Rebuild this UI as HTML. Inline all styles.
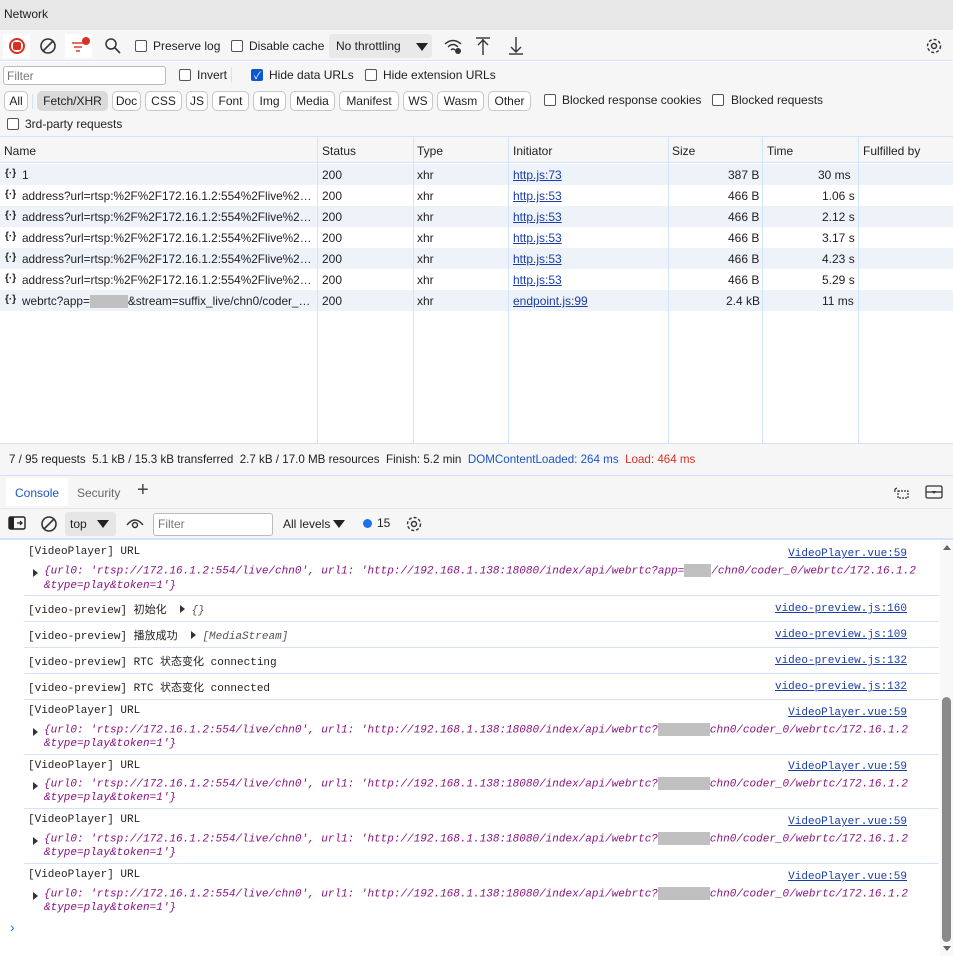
<!DOCTYPE html>
<html><head><meta charset="utf-8"><style>
*{box-sizing:border-box;margin:0;padding:0}
body{width:953px;height:956px;overflow:hidden;background:#fff;font-family:"Liberation Sans","Noto Sans CJK SC",sans-serif;font-size:12px;color:#1f1f1f;position:relative}
.a{position:absolute;white-space:nowrap}
.cb{position:absolute;width:12px;height:12px;border:1px solid #555;border-radius:2px;background:#fff}
.cbc{background:#0b57d0;border-color:#0b57d0}
.btn{position:absolute;top:91px;height:20px;border:1px solid #c7c7c7;border-radius:5px;background:#fff;font-size:12px;line-height:18px;text-align:center;color:#1f1f1f}
.row{position:absolute;left:0;width:953px;height:21px}
.st{background:#eef2f9}
.mono{font-family:"Liberation Mono","Noto Sans CJK SC",monospace;font-size:11px}
.sep{position:absolute;left:24px;width:915px;height:1px;background:#d3e3fd}
.lnk{color:#1a3da8;text-decoration:underline}
.obj{color:#881280;font-style:italic}
.gray{display:inline-block;background:#c0c0c0;height:13px;vertical-align:middle}
.tri{display:inline-block;width:0;height:0;border-left:5px solid #333;border-top:4px solid transparent;border-bottom:4px solid transparent}
.vl{position:absolute;top:137px;height:306px;width:1px;background:#d3e3fd}
.nm{width:292px;overflow:hidden;text-overflow:ellipsis;font-size:11.8px}
</style></head><body>
<div class="a" style="left:0;top:0;width:953px;height:30px;background:#e7e7e7"></div>
<div class="a" style="left:4px;top:7px">Network</div>
<div class="a" style="left:0;top:30px;width:953px;height:31px;background:#f6f6f6;border-bottom:1px solid #d3e3fd"></div>
<div class="a" style="left:3px;top:34px;width:27px;height:24px;background:#fff"></div>
<div class="a" style="left:9px;top:38px;width:16px;height:16px;border:2px solid #d93025;border-radius:50%"></div>
<div class="a" style="left:13px;top:42px;width:8px;height:8px;background:#d93025;border-radius:2px"></div>
<svg class="a" style="left:39px;top:37px" width="18" height="18"><circle cx="9" cy="9" r="7" fill="none" stroke="#333" stroke-width="1.6"/><line x1="4" y1="14" x2="14" y2="4" stroke="#333" stroke-width="1.6"/></svg>
<div class="a" style="left:65px;top:34px;width:27px;height:24px;background:#fff"></div>
<svg class="a" style="left:70px;top:37px" width="22" height="18"><g stroke="#d93025" stroke-width="1.4"><line x1="2" y1="6" x2="14" y2="6"/><line x1="4" y1="10" x2="12" y2="10"/><line x1="6" y1="14" x2="10" y2="14"/></g><circle cx="16" cy="4" r="4" fill="#d93025"/></svg>
<svg class="a" style="left:104px;top:37px" width="18" height="18"><circle cx="7" cy="7" r="5" fill="none" stroke="#333" stroke-width="1.5"/><line x1="11" y1="11" x2="16" y2="16" stroke="#333" stroke-width="1.6"/></svg>
<div class="cb" style="left:135px;top:40px"></div><div class="a" style="left:153px;top:39px">Preserve log</div>
<div class="cb" style="left:231px;top:40px"></div><div class="a" style="left:249px;top:39px">Disable cache</div>
<div class="a" style="left:329px;top:34px;width:103px;height:24px;background:#e9e9e9;border-radius:3px"></div>
<div class="a" style="left:336px;top:39px">No throttling</div>
<div class="a" style="left:416px;top:43px;border-left:6px solid transparent;border-right:6px solid transparent;border-top:8px solid #222"></div>
<svg class="a" style="left:443px;top:37px" width="20" height="18"><g fill="none" stroke="#333" stroke-width="1.4"><path d="M2 7 Q10 0 18 7"/><path d="M5 10 Q10 5 15 10"/><path d="M8 13 Q10 11 12 13"/></g><circle cx="15" cy="14" r="3" fill="#333"/></svg>
<svg class="a" style="left:475px;top:36px" width="16" height="20"><g stroke="#333" stroke-width="1.4" fill="none"><line x1="1" y1="2" x2="15" y2="2"/><line x1="8" y1="3" x2="8" y2="19"/><path d="M3 9 L8 4 L13 9"/></g></svg>
<svg class="a" style="left:508px;top:36px" width="16" height="20"><g stroke="#333" stroke-width="1.4" fill="none"><line x1="1" y1="18" x2="15" y2="18"/><line x1="8" y1="1" x2="8" y2="16"/><path d="M3 11 L8 16 L13 11"/></g></svg>
<svg class="a" style="left:925px;top:37px" width="18" height="18"><circle cx="9" cy="9" r="6.5" fill="none" stroke="#333" stroke-width="1.4" stroke-dasharray="3 2"/><circle cx="9" cy="9" r="2.5" fill="none" stroke="#333" stroke-width="1.4"/></svg>
<div class="a" style="left:0;top:62px;width:953px;height:75px;background:#f6f6f6;border-bottom:1px solid #d3e3fd"></div>
<div class="a" style="left:3px;top:66px;width:163px;height:19px;background:#fff;border:1px solid #bbb;border-radius:3px"></div>
<div class="a" style="left:7px;top:69px;color:#777">Filter</div>
<div class="cb" style="left:179px;top:69px"></div><div class="a" style="left:197px;top:68px">Invert</div>
<div class="a" style="left:231px;top:67px;width:1px;height:16px;background:#d3e3fd"></div>
<div class="cb cbc" style="left:251px;top:69px"></div><div class="a" style="left:254px;top:67px;color:#fff;font-size:10px">✓</div>
<div class="a" style="left:269px;top:68px">Hide data URLs</div>
<div class="cb" style="left:365px;top:69px"></div><div class="a" style="left:383px;top:68px">Hide extension URLs</div>
<div class="btn" style="left:4px;width:24px">All</div>
<div class="a" style="left:32px;top:94px;width:1px;height:15px;background:#d3e3fd"></div>
<div class="btn" style="left:37px;width:71px;background:#dadada;border-color:#dadada">Fetch/XHR</div>
<div class="btn" style="left:112px;width:29px">Doc</div>
<div class="btn" style="left:145px;width:37px">CSS</div>
<div class="btn" style="left:186px;width:22px">JS</div>
<div class="btn" style="left:212px;width:37px">Font</div>
<div class="btn" style="left:253px;width:33px">Img</div>
<div class="btn" style="left:290px;width:45px">Media</div>
<div class="btn" style="left:339px;width:60px">Manifest</div>
<div class="btn" style="left:403px;width:30px">WS</div>
<div class="btn" style="left:437px;width:47px">Wasm</div>
<div class="btn" style="left:488px;width:43px">Other</div>
<div class="cb" style="left:544px;top:94px"></div><div class="a" style="left:562px;top:93px">Blocked response cookies</div>
<div class="cb" style="left:712px;top:94px"></div><div class="a" style="left:731px;top:93px">Blocked requests</div>
<div class="cb" style="left:7px;top:118px"></div><div class="a" style="left:25px;top:117px">3rd-party requests</div>
<div class="a" style="left:0;top:137px;width:953px;height:26px;background:#f6f6f6;border-bottom:1px solid #d3e3fd"></div>
<div class="a" style="left:4px;top:144px">Name</div>
<div class="a" style="left:322px;top:144px">Status</div>
<div class="a" style="left:417px;top:144px">Type</div>
<div class="a" style="left:513px;top:144px">Initiator</div>
<div class="a" style="left:672px;top:144px">Size</div>
<div class="a" style="left:767px;top:144px">Time</div>
<div class="a" style="left:863px;top:144px">Fulfilled by</div>
<div class="row st" style="top:164px"></div>
<div class="row st" style="top:206px"></div>
<div class="row st" style="top:248px"></div>
<div class="row st" style="top:290px"></div>
<div class="vl" style="left:317px"></div><div class="vl" style="left:413px"></div><div class="vl" style="left:508px"></div><div class="vl" style="left:668px"></div><div class="vl" style="left:762px"></div><div class="vl" style="left:858px"></div>
<div class="a" style="left:5px;top:168px;font-size:10px;font-weight:bold">{·}</div><div class="a" style="left:22px;top:168px">1</div>
<div class="a" style="left:322px;top:168px">200</div><div class="a" style="left:417px;top:168px">xhr</div><div class="a lnk" style="left:513px;top:168px">http.js:73</div><div class="a" style="left:728px;top:168px">387 B</div><div class="a" style="left:818px;top:168px">30 ms</div>
<div class="a" style="left:5px;top:189px;font-size:10px;font-weight:bold">{·}</div><div class="a nm" style="left:22px;top:189px">address?url=rtsp:%2F%2F172.16.1.2:554%2Flive%2Fchn0</div>
<div class="a" style="left:322px;top:189px">200</div><div class="a" style="left:417px;top:189px">xhr</div><div class="a lnk" style="left:513px;top:189px">http.js:53</div><div class="a" style="left:728px;top:189px">466 B</div><div class="a" style="left:822px;top:189px">1.06 s</div>
<div class="a" style="left:5px;top:210px;font-size:10px;font-weight:bold">{·}</div><div class="a nm" style="left:22px;top:210px">address?url=rtsp:%2F%2F172.16.1.2:554%2Flive%2Fchn0</div>
<div class="a" style="left:322px;top:210px">200</div><div class="a" style="left:417px;top:210px">xhr</div><div class="a lnk" style="left:513px;top:210px">http.js:53</div><div class="a" style="left:728px;top:210px">466 B</div><div class="a" style="left:822px;top:210px">2.12 s</div>
<div class="a" style="left:5px;top:231px;font-size:10px;font-weight:bold">{·}</div><div class="a nm" style="left:22px;top:231px">address?url=rtsp:%2F%2F172.16.1.2:554%2Flive%2Fchn0</div>
<div class="a" style="left:322px;top:231px">200</div><div class="a" style="left:417px;top:231px">xhr</div><div class="a lnk" style="left:513px;top:231px">http.js:53</div><div class="a" style="left:728px;top:231px">466 B</div><div class="a" style="left:822px;top:231px">3.17 s</div>
<div class="a" style="left:5px;top:252px;font-size:10px;font-weight:bold">{·}</div><div class="a nm" style="left:22px;top:252px">address?url=rtsp:%2F%2F172.16.1.2:554%2Flive%2Fchn0</div>
<div class="a" style="left:322px;top:252px">200</div><div class="a" style="left:417px;top:252px">xhr</div><div class="a lnk" style="left:513px;top:252px">http.js:53</div><div class="a" style="left:728px;top:252px">466 B</div><div class="a" style="left:822px;top:252px">4.23 s</div>
<div class="a" style="left:5px;top:273px;font-size:10px;font-weight:bold">{·}</div><div class="a nm" style="left:22px;top:273px">address?url=rtsp:%2F%2F172.16.1.2:554%2Flive%2Fchn0</div>
<div class="a" style="left:322px;top:273px">200</div><div class="a" style="left:417px;top:273px">xhr</div><div class="a lnk" style="left:513px;top:273px">http.js:53</div><div class="a" style="left:728px;top:273px">466 B</div><div class="a" style="left:822px;top:273px">5.29 s</div>
<div class="a" style="left:5px;top:294px;font-size:10px;font-weight:bold">{·}</div><div class="a nm" style="left:22px;top:294px">webrtc?app=<span class="gray" style="width:38px"></span>&amp;stream=suffix_live/chn0/coder_0/webrtc</div>
<div class="a" style="left:322px;top:294px">200</div><div class="a" style="left:417px;top:294px">xhr</div><div class="a lnk" style="left:513px;top:294px">endpoint.js:99</div><div class="a" style="left:726px;top:294px">2.4 kB</div><div class="a" style="left:822px;top:294px">11 ms</div>
<div class="a" style="left:0;top:443px;width:953px;height:33px;background:#f6f6f6;border-top:1px solid #d3e3fd;border-bottom:1px solid #d3e3fd"></div>
<div class="a" style="left:9px;top:453px;font-size:11.6px">7 / 95 requests &nbsp;5.1 kB / 15.3 kB transferred &nbsp;2.7 kB / 17.0 MB resources &nbsp;Finish: 5.2 min &nbsp;<span style="color:#1a55c8">DOMContentLoaded: 264 ms</span> &nbsp;<span style="color:#d93025">Load: 464 ms</span></div>
<div class="a" style="left:0;top:476px;width:953px;height:32px;background:#f6f6f6;box-shadow:0 1px 2px rgba(0,0,0,.15)"></div>
<div class="a" style="left:6px;top:478px;width:62px;height:28px;background:#fff"></div>
<div class="a" style="left:15px;top:486px;color:#1a55c8">Console</div>
<div class="a" style="left:77px;top:486px;color:#666">Security</div>
<div class="a" style="left:137px;top:479px;font-size:20px;color:#444">+</div>
<svg class="a" style="left:892px;top:485px" width="18" height="14"><g fill="none" stroke="#333" stroke-width="1.2"><rect x="6" y="6" width="10" height="7" stroke-dasharray="2 1"/><path d="M5 3 Q2 4 3 7"/></g></svg>
<svg class="a" style="left:925px;top:485px" width="18" height="14"><g fill="none" stroke="#333" stroke-width="1.3"><rect x="1" y="1" width="16" height="12" rx="1.5"/><line x1="1" y1="7" x2="17" y2="7"/></g><path d="M7 6 L11 6 L9 9z" fill="#333"/></svg>
<div class="a" style="left:0;top:509px;width:953px;height:31px;background:#f6f6f6;border-bottom:2px solid #d3e3fd"></div>
<svg class="a" style="left:8px;top:516px" width="18" height="14"><rect x="1" y="1" width="16" height="12" rx="1.5" fill="none" stroke="#222" stroke-width="1.4"/><rect x="1" y="1" width="5" height="12" fill="#222"/><path d="M9 7 h5 M12 5 l2 2 l-2 2" stroke="#222" stroke-width="1.2" fill="none"/></svg>
<svg class="a" style="left:40px;top:515px" width="18" height="18"><circle cx="9" cy="9" r="7" fill="none" stroke="#333" stroke-width="1.6"/><line x1="4" y1="14" x2="14" y2="4" stroke="#333" stroke-width="1.6"/></svg>
<div class="a" style="left:65px;top:512px;width:51px;height:24px;background:#e6e6e6;border-radius:3px"></div>
<div class="a" style="left:70px;top:517px">top</div>
<div class="a" style="left:97px;top:520px;border-left:6px solid transparent;border-right:6px solid transparent;border-top:8px solid #222"></div>
<svg class="a" style="left:126px;top:517px" width="18" height="12"><path d="M1 8 Q9 -2 17 8" fill="none" stroke="#333" stroke-width="1.4"/><circle cx="9" cy="8" r="2.5" fill="none" stroke="#333" stroke-width="1.4"/></svg>
<div class="a" style="left:153px;top:513px;width:120px;height:23px;background:#fff;border:1px solid #bbb;border-radius:3px"></div>
<div class="a" style="left:158px;top:517px;color:#777">Filter</div>
<div class="a" style="left:283px;top:517px">All levels</div>
<div class="a" style="left:333px;top:520px;border-left:6px solid transparent;border-right:6px solid transparent;border-top:8px solid #222"></div>
<div class="a" style="left:363px;top:519px;width:9px;height:9px;border-radius:50%;background:#1a73e8"></div>
<div class="a" style="left:377px;top:516px">15</div>
<svg class="a" style="left:405px;top:515px" width="18" height="18"><circle cx="9" cy="9" r="6.5" fill="none" stroke="#333" stroke-width="1.4" stroke-dasharray="3 2"/><circle cx="9" cy="9" r="2.5" fill="none" stroke="#333" stroke-width="1.4"/></svg>
<div class="mono">
<div class="a" style="left:28px;top:546px">[VideoPlayer] URL</div><div class="a lnk" style="right:46px;top:548px">VideoPlayer.vue:59</div>
<div class="a" style="left:33px;top:569px"><span class="tri"></span></div>
<div class="a obj" style="left:44px;top:564px">{url0: 'rtsp://172.16.1.2:554/live/chn0', url1: 'http://192.168.1.138:18080/index/api/webrtc?app=<span class="gray" style="width:27px"></span>/chn0/coder_0/webrtc/172.16.1.2</div>
<div class="a obj" style="left:44px;top:580px">&amp;type=play&amp;token=1'}</div>
<div class="sep" style="top:595px"></div>
<div class="a" style="left:28px;top:601px">[video-preview] 初始化 &nbsp;<span class="tri"></span> <span class="obj" style="color:#555">{}</span></div><div class="a lnk" style="right:46px;top:603px">video-preview.js:160</div>
<div class="sep" style="top:621px"></div>
<div class="a" style="left:28px;top:627px">[video-preview] 播放成功 &nbsp;<span class="tri"></span> <span class="obj" style="color:#555">[MediaStream]</span></div><div class="a lnk" style="right:46px;top:629px">video-preview.js:109</div>
<div class="sep" style="top:647px"></div>
<div class="a" style="left:28px;top:653px">[video-preview] RTC 状态变化 connecting</div><div class="a lnk" style="right:46px;top:655px">video-preview.js:132</div>
<div class="sep" style="top:673px"></div>
<div class="a" style="left:28px;top:679px">[video-preview] RTC 状态变化 connected</div><div class="a lnk" style="right:46px;top:681px">video-preview.js:132</div>
<div class="sep" style="top:699px"></div>
<div class="a" style="left:28px;top:705px">[VideoPlayer] URL</div><div class="a lnk" style="right:46px;top:707px">VideoPlayer.vue:59</div>
<div class="a" style="left:33px;top:728px"><span class="tri"></span></div>
<div class="a obj" style="left:44px;top:723px">{url0: 'rtsp://172.16.1.2:554/live/chn0', url1: 'http://192.168.1.138:18080/index/api/webrtc?<span class="gray" style="width:52px"></span>chn0/coder_0/webrtc/172.16.1.2</div>
<div class="a obj" style="left:44px;top:738px">&amp;type=play&amp;token=1'}</div>
<div class="sep" style="top:754px"></div>
<div class="a" style="left:28px;top:760px">[VideoPlayer] URL</div><div class="a lnk" style="right:46px;top:761px">VideoPlayer.vue:59</div>
<div class="a" style="left:33px;top:782px"><span class="tri"></span></div>
<div class="a obj" style="left:44px;top:777px">{url0: 'rtsp://172.16.1.2:554/live/chn0', url1: 'http://192.168.1.138:18080/index/api/webrtc?<span class="gray" style="width:52px"></span>chn0/coder_0/webrtc/172.16.1.2</div>
<div class="a obj" style="left:44px;top:792px">&amp;type=play&amp;token=1'}</div>
<div class="sep" style="top:808px"></div>
<div class="a" style="left:28px;top:814px">[VideoPlayer] URL</div><div class="a lnk" style="right:46px;top:816px">VideoPlayer.vue:59</div>
<div class="a" style="left:33px;top:837px"><span class="tri"></span></div>
<div class="a obj" style="left:44px;top:832px">{url0: 'rtsp://172.16.1.2:554/live/chn0', url1: 'http://192.168.1.138:18080/index/api/webrtc?<span class="gray" style="width:52px"></span>chn0/coder_0/webrtc/172.16.1.2</div>
<div class="a obj" style="left:44px;top:847px">&amp;type=play&amp;token=1'}</div>
<div class="sep" style="top:863px"></div>
<div class="a" style="left:28px;top:869px">[VideoPlayer] URL</div><div class="a lnk" style="right:46px;top:871px">VideoPlayer.vue:59</div>
<div class="a" style="left:33px;top:892px"><span class="tri"></span></div>
<div class="a obj" style="left:44px;top:887px">{url0: 'rtsp://172.16.1.2:554/live/chn0', url1: 'http://192.168.1.138:18080/index/api/webrtc?<span class="gray" style="width:52px"></span>chn0/coder_0/webrtc/172.16.1.2</div>
<div class="a obj" style="left:44px;top:902px">&amp;type=play&amp;token=1'}</div>
</div>
<div class="a" style="left:10px;top:919px;color:#1a73e8;font-size:14px">›</div>
<div class="a" style="left:940px;top:541px;width:13px;height:415px;background:#f8f8f8"></div>
<div class="a" style="left:943px;top:545px;border-left:4px solid transparent;border-right:4px solid transparent;border-bottom:5px solid #666"></div>
<div class="a" style="left:942px;top:697px;width:9px;height:245px;background:#8a8a8a;border-radius:5px"></div>
<div class="a" style="left:943px;top:946px;border-left:4px solid transparent;border-right:4px solid transparent;border-top:5px solid #666"></div>
</body></html>
